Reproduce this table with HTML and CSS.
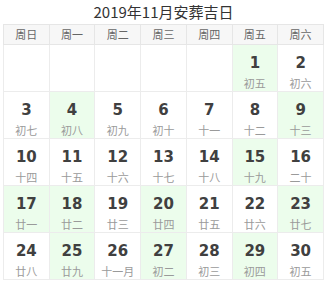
FILE: index.html
```html
<!DOCTYPE html>
<html lang="zh">
<head>
<meta charset="utf-8">
<link rel="stylesheet" href="styles.css">
</head>
<body>
<div class="cal">
  <div class="title">2019年11月安葬吉日</div>
  <table class="grid">
    <thead>
      <tr><th>周日</th><th>周一</th><th>周二</th><th>周三</th><th>周四</th><th>周五</th><th>周六</th></tr>
    </thead>
    <tbody>
      <tr>
        <td></td><td></td><td></td><td></td><td></td>
        <td class="good"><b>1</b><i>初五</i></td>
        <td><b>2</b><i>初六</i></td>
      </tr>
      <tr>
        <td><b>3</b><i>初七</i></td>
        <td class="good"><b>4</b><i>初八</i></td>
        <td><b>5</b><i>初九</i></td>
        <td><b>6</b><i>初十</i></td>
        <td><b>7</b><i>十一</i></td>
        <td><b>8</b><i>十二</i></td>
        <td class="good"><b>9</b><i>十三</i></td>
      </tr>
      <tr>
        <td><b>10</b><i>十四</i></td>
        <td><b>11</b><i>十五</i></td>
        <td><b>12</b><i>十六</i></td>
        <td><b>13</b><i>十七</i></td>
        <td><b>14</b><i>十八</i></td>
        <td class="good"><b>15</b><i>十九</i></td>
        <td><b>16</b><i>二十</i></td>
      </tr>
      <tr>
        <td class="good"><b>17</b><i>廿一</i></td>
        <td class="good"><b>18</b><i>廿二</i></td>
        <td><b>19</b><i>廿三</i></td>
        <td class="good"><b>20</b><i>廿四</i></td>
        <td><b>21</b><i>廿五</i></td>
        <td><b>22</b><i>廿六</i></td>
        <td class="good"><b>23</b><i>廿七</i></td>
      </tr>
      <tr>
        <td><b>24</b><i>廿八</i></td>
        <td class="good"><b>25</b><i>廿九</i></td>
        <td><b>26</b><i>十一月</i></td>
        <td class="good"><b>27</b><i>初二</i></td>
        <td><b>28</b><i>初三</i></td>
        <td class="good"><b>29</b><i>初四</i></td>
        <td><b>30</b><i>初五</i></td>
      </tr>
    </tbody>
  </table>
</div>
</body>
</html>
```
FILE: styles.css
```css
html, body {
  margin: 0;
  padding: 0;
  background: #fff;
}
body {
  font-family: "Noto Sans CJK SC", "Noto Sans", sans-serif;
  color: #333;
}
.cal {
  width: 321px;
  margin-left: 3px;
}
.title {
  height: 24px;
  line-height: 24px;
  text-align: center;
  font-size: 15px;
  color: #333;
}
.grid {
  width: 321px;
  border-collapse: collapse;
  table-layout: fixed;
}
.grid th {
  height: 19px;
  padding: 0;
  background: #f7f7f7;
  border: 1px solid #e6e6e6;
  font-size: 11px;
  font-weight: normal;
  color: #666;
  text-align: center;
  line-height: 19px;
}
.grid td {
  height: 46px;
  padding: 0;
  border: 1px solid #ececec;
  text-align: center;
  vertical-align: top;
}
.grid td.good {
  background: #ecfdec;
}
.grid b {
  display: block;
  margin-top: 8px;
  font-family: "DejaVu Sans", "Noto Sans", sans-serif;
  font-size: 15px;
  font-weight: bold;
  line-height: 21px;
  color: #404040;
}
.grid i {
  display: block;
  margin-top: 2px;
  font-style: normal;
  font-size: 11px;
  line-height: 14px;
  color: #9a9a9a;
}
```
